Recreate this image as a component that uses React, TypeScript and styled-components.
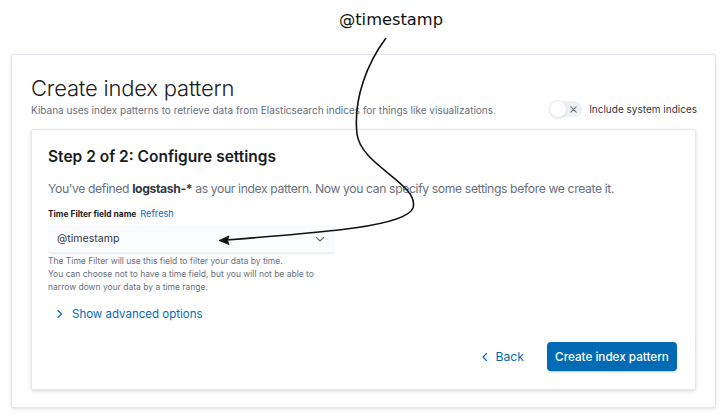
import styled, { createGlobalStyle } from "styled-components";

const GlobalStyle = createGlobalStyle`
  html, body {
    margin: 0;
    padding: 0;
    background: #ffffff;
  }
  body {
    font-family: Inter, "Noto Sans", sans-serif;
    color: #1a1c21;
  }
`;

const Page = styled.div`
  position: relative;
  width: 725px;
  height: 417px;
  overflow: hidden;
  background: #ffffff;
`;

const AnnotationRow = styled.div`
  height: 54px;
  display: flex;
  justify-content: center;
  padding-left: 57px;
  box-sizing: border-box;
`;

const AnnotationLabel = styled.div`
  font-family: "DejaVu Sans", Verdana, sans-serif;
  font-size: 16.3px;
  line-height: 20px;
  margin-top: 10px;
  color: #111111;
`;

const OuterPanel = styled.div`
  margin: 0 9px 0 11px;
  height: 354px;
  box-sizing: border-box;
  padding: 19px 19px 17px 19px;
  border: 1px solid #e4e8ee;
  border-radius: 2px;
  box-shadow: 0 1px 3px rgba(0, 0, 0, 0.08), 0 2px 4px rgba(0, 0, 0, 0.04);
  display: flex;
  flex-direction: column;
`;

const HeaderRow = styled.div`
  display: flex;
  align-items: flex-end;
  justify-content: space-between;
`;

const TitleBlock = styled.div`
  display: flex;
  flex-direction: column;
`;

const Title = styled.h1`
  margin: 0;
  font-size: 22px;
  line-height: 28px;
  font-weight: 300;
  color: #1a1c21;
  letter-spacing: -0.2px;
`;

const Subtitle = styled.p`
  margin: 1px 0 0;
  font-size: 10px;
  line-height: 14px;
  color: #69707d;
`;

const SwitchWrap = styled.label`
  display: flex;
  align-items: center;
  gap: 7px;
  font-size: 10px;
  line-height: 14px;
  color: #343741;
  margin-right: -1px;
`;

const Track = styled.span`
  position: relative;
  width: 32px;
  height: 16px;
  border-radius: 8px;
  background: #edf0f5;
  display: flex;
  align-items: center;
  justify-content: flex-end;
  padding-right: 4px;
  box-sizing: border-box;
`;

const Thumb = styled.span`
  position: absolute;
  left: -1px;
  top: -1px;
  width: 18px;
  height: 18px;
  border-radius: 50%;
  background: #ffffff;
  border: 1px solid #e6eaf0;
  box-sizing: border-box;
  box-shadow: 0 1px 2px rgba(0, 0, 0, 0.08);
`;

const InnerPanel = styled.div`
  margin-top: 12px;
  flex: 1;
  box-sizing: border-box;
  padding: 17px 18px 18px 16px;
  border: 1px solid #e4e8ee;
  border-radius: 2px;
  box-shadow: 0 1px 3px rgba(0, 0, 0, 0.1), 0 2px 5px rgba(0, 0, 0, 0.05);
  display: flex;
  flex-direction: column;
`;

const StepTitle = styled.h2`
  margin: 0;
  font-size: 15.5px;
  line-height: 20px;
  font-weight: 600;
  color: #1a1c21;
`;

const Lead = styled.p`
  margin: 12px 0 0;
  font-size: 12.2px;
  line-height: 20px;
  letter-spacing: -0.38px;
  color: #69707d;
  white-space: nowrap;

  b {
    font-weight: 700;
    color: #343741;
  }
`;

const FieldLabel = styled.div`
  margin-top: 8px;
  font-size: 8.4px;
  line-height: 14px;
  font-weight: 700;
  color: #1a1c21;
`;

const LinkText = styled.span`
  color: #006bb4;
  font-weight: 400;
  font-size: 9.2px;
  margin-left: 4px;
`;

const Select = styled.div`
  margin-top: 4px;
  width: 287px;
  height: 28px;
  box-sizing: border-box;
  padding: 0 10px 0 9px;
  background: #fbfcfd;
  border-bottom: 1px solid #eef1f5;
  box-shadow: 0 1px 1px -1px rgba(152, 162, 179, 0.2), 0 3px 2px -2px rgba(152, 162, 179, 0.2);
  display: flex;
  align-items: center;
  justify-content: space-between;
  font-size: 10.6px;
  color: #343741;
`;

const HelpText = styled.div`
  margin-top: 2px;
  font-size: 8.5px;
  line-height: 13px;
  color: #69707d;
`;

const Advanced = styled.div`
  margin-top: 11px;
  display: flex;
  align-items: center;
  gap: 7px;
  padding-left: 7px;
  font-size: 11.5px;
  line-height: 18px;
  color: #006bb4;
`;

const Actions = styled.div`
  margin-top: auto;
  display: flex;
  justify-content: flex-end;
  align-items: center;
  gap: 23px;
`;

const BackLink = styled.span`
  display: flex;
  align-items: center;
  gap: 6px;
  font-size: 12.2px;
  color: #006bb4;
`;

const PrimaryButton = styled.button`
  height: 29px;
  width: 130px;
  border: none;
  border-radius: 4px;
  background: #006bb4;
  color: #ffffff;
  font-family: Inter, "Noto Sans", sans-serif;
  font-size: 11.7px;
  font-weight: 500;
  padding: 0;
  box-shadow: 0 2px 2px -1px rgba(0, 61, 103, 0.3);
`;

const Overlay = styled.svg`
  position: absolute;
  left: 0;
  top: 0;
  pointer-events: none;
`;

const Chevron = ({ dir, color }: { dir: "left" | "right" | "down"; color: string }) => {
  const d =
    dir === "right" ? "M3 1.5 L6.5 5 L3 8.5" : dir === "left" ? "M6.5 1.5 L3 5 L6.5 8.5" : "M1.5 3.5 L5 7 L8.5 3.5";
  return (
    <svg width="10" height="10" viewBox="0 0 10 10">
      <path d={d} fill="none" stroke={color} strokeWidth="1.1" strokeLinecap="round" strokeLinejoin="round" />
    </svg>
  );
};

export default function App() {
  return (
    <Page>
      <GlobalStyle />
      <AnnotationRow>
        <AnnotationLabel>@timestamp</AnnotationLabel>
      </AnnotationRow>
      <OuterPanel>
        <HeaderRow>
          <TitleBlock>
            <Title>Create index pattern</Title>
            <Subtitle>
              Kibana uses index patterns to retrieve data from Elasticsearch indices for things like visualizations.
            </Subtitle>
          </TitleBlock>
          <SwitchWrap>
            <Track>
              <Thumb />
              <svg width="9" height="9" viewBox="0 0 10 10">
                <path d="M2 2 L8 8 M8 2 L2 8" stroke="#69707d" strokeWidth="1.2" strokeLinecap="round" />
              </svg>
            </Track>
            Include system indices
          </SwitchWrap>
        </HeaderRow>
        <InnerPanel>
          <StepTitle>Step 2 of 2: Configure settings</StepTitle>
          <Lead>
            You've defined <b>logstash-*</b> as your index pattern. Now you can specify some settings before we create
            it.
          </Lead>
          <FieldLabel>
            Time Filter field name<LinkText>Refresh</LinkText>
          </FieldLabel>
          <Select>
            <span>@timestamp</span>
            <Chevron dir="down" color="#69707d" />
          </Select>
          <HelpText>
            The Time Filter will use this field to filter your data by time.
            <br />
            You can choose not to have a time field, but you will not be able to
            <br />
            narrow down your data by a time range.
          </HelpText>
          <Advanced>
            <Chevron dir="right" color="#006bb4" />
            Show advanced options
          </Advanced>
          <Actions>
            <BackLink>
              <Chevron dir="left" color="#006bb4" />
              Back
            </BackLink>
            <PrimaryButton>Create index pattern</PrimaryButton>
          </Actions>
        </InnerPanel>
      </OuterPanel>
      <Overlay width="725" height="417" viewBox="0 0 725 417">
        <path
          d="M386 38 C 368 62, 353 98, 357 134 C 361 166, 420 184, 413 208 C 406 226, 330 232, 226 240"
          fill="none"
          stroke="#111"
          strokeWidth="1.6"
        />
        <path d="M219 240.5 L229 236 L227.5 240.2 L229 244.6 Z" fill="#111" stroke="#111" strokeWidth="0.8" />
      </Overlay>
    </Page>
  );
}
